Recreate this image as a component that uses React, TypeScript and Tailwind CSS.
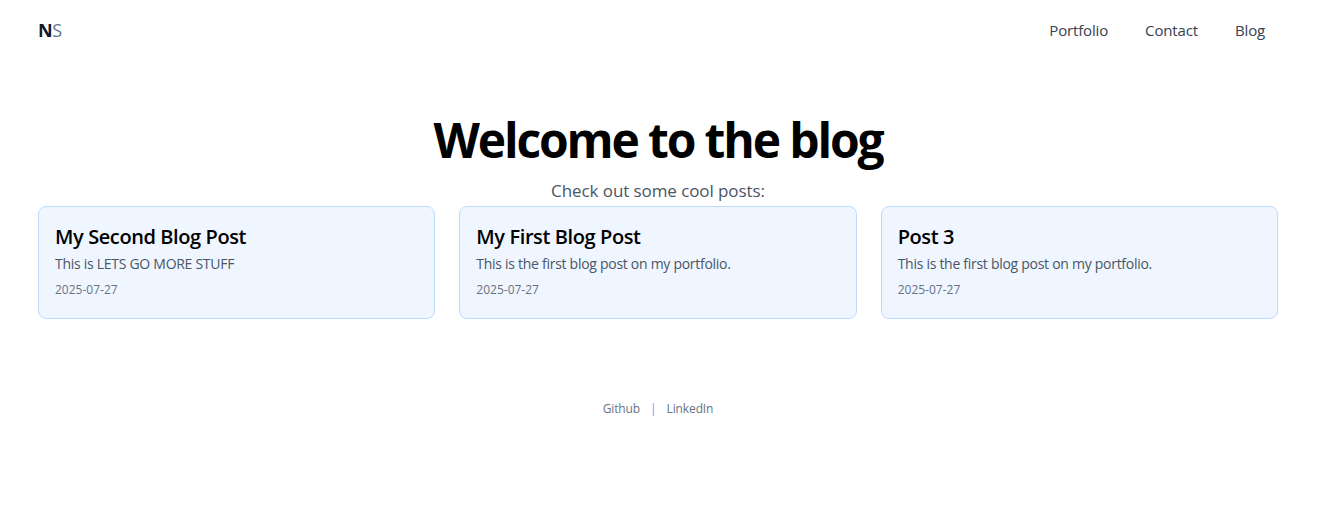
const posts = [
  {
    title: "My Second Blog Post",
    summary: "This is LETS GO MORE STUFF",
    date: "2025-07-27",
  },
  {
    title: "My First Blog Post",
    summary: "This is the first blog post on my portfolio.",
    date: "2025-07-27",
  },
  {
    title: "Post 3",
    summary: "This is the first blog post on my portfolio.",
    date: "2025-07-27",
  },
];

const font = "font-['Segoe_UI','Open_Sans','Noto_Sans',sans-serif]";

export default function App() {
  return (
    <div className={`min-h-[521px] w-[1316px] bg-white px-[38px] ${font}`}>
      <nav className="flex h-[60px] items-center justify-between">
        <a className="text-lg leading-none tracking-tight" href="#">
          <span className="font-bold text-gray-900">N</span>
          <span className="text-slate-500">S</span>
        </a>
        <div className="mr-[13px] flex items-center gap-[37px] text-[15px] tracking-[-0.01em] text-gray-700">
          <a href="#">Portfolio</a>
          <a href="#">Contact</a>
          <a href="#">Blog</a>
        </div>
      </nav>

      <main>
        <h1 className="mt-[56px] text-center text-5xl leading-none font-bold tracking-[-0.045em] text-black">
          Welcome to the blog
        </h1>
        <p className="mt-[13px] text-center text-[17px] leading-7 tracking-[-0.005em] text-gray-600">
          Check out some cool posts:
        </p>

        <div className="mt-px grid grid-cols-3 gap-6">
          {posts.map((post) => (
            <a
              className="block rounded-lg border border-blue-200 bg-blue-50 px-4 pt-4 pb-5"
              href="#"
              key={post.title}
            >
              <h2 className="text-xl leading-7 font-semibold tracking-[-0.02em] text-black">
                {post.title}
              </h2>
              <p className="mt-[3px] text-sm leading-5 tracking-[-0.02em] text-gray-600">
                {post.summary}
              </p>
              <p className="mt-2 text-xs leading-4 text-gray-500">
                {post.date}
              </p>
            </a>
          ))}
        </div>
      </main>

      <footer className="mt-[82px] flex justify-center gap-2.5 text-xs leading-4 tracking-[-0.01em] text-gray-500">
        <a href="#">Github</a>
        <span className="text-blue-400">|</span>
        <a href="#">LinkedIn</a>
      </footer>
    </div>
  );
}
